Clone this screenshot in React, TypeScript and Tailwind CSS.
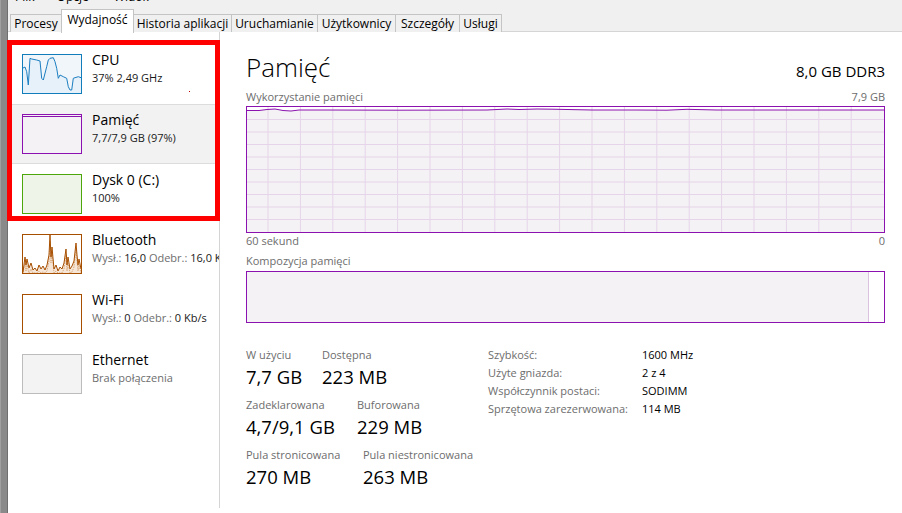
import type { ReactNode } from "react";

const sans = "font-['Open_Sans','Noto_Sans',sans-serif]";

const cpuPoints = [
  [0, 13], [2, 12], [3.7, 16.7], [5.3, 30], [7, 3.3], [8.7, 4], [13.7, 5], [17, 6], [18.7, 23.3],
  [20.3, 25], [23.7, 11.7], [25.3, 5], [27, 3.3], [30.3, 2.7], [32, 6.7], [33.7, 13.3], [35.3, 23.3],
  [37, 20], [40.3, 21.7], [43.7, 23.3], [45.3, 31.7], [47, 35], [48.7, 35], [50.3, 23.3], [52, 22.7],
  [55.3, 21.7], [58, 22.7],
];

const btPoints = [
  [0, 37], [2, 22], [3, 30], [4, 24], [6, 33], [8, 28], [10, 35], [12, 33], [14, 36], [16, 30],
  [18, 34], [20, 31], [22, 35], [24, 30], [26, 20], [27, 0], [28, 22], [29, 12], [31, 34], [33, 30],
  [35, 36], [37, 32], [39, 34], [41, 28], [43, 14], [44, 30], [45, 22], [47, 34], [49, 31], [51, 26],
  [53, 8], [54, 20], [55, 30], [56, 24], [58, 34],
];

const line = (pts: number[][]) => pts.map(([x, y]) => `${x},${y}`).join(" ");

const memLine = [
  [0, 3.5], [12, 3.5], [20, 2.5], [28, 2], [36, 3.5], [44, 4], [52, 3], [80, 3], [150, 3.2],
  [240, 3], [260, 2], [272, 2.5], [290, 2], [305, 2.2], [325, 2.6], [345, 3], [390, 3], [420, 3.2],
  [440, 2.3], [470, 3], [637, 3],
];

const tabs = [
  { label: "Procesy", w: "w-[52px]" },
  { label: "Wydajność", w: "w-[73px]", active: true },
  { label: "Historia aplikacji", w: "w-[99px]" },
  { label: "Uruchamianie", w: "w-[87px]" },
  { label: "Użytkownicy", w: "w-[79px]" },
  { label: "Szczegóły", w: "w-[65px]" },
  { label: "Usługi", w: "w-[43px]" },
];

function Thumb({ border, bg, children }: { border: string; bg: string; children?: ReactNode }) {
  return (
    <div className={`h-[40px] w-[60px] shrink-0 border ${border} ${bg}`}>
      {children}
    </div>
  );
}

function SideItem({
  thumb,
  title,
  sub,
  selected,
}: {
  thumb: ReactNode;
  title: string;
  sub: ReactNode;
  selected?: boolean;
}) {
  return (
    <div
      className={`flex h-[60px] items-start border-y pl-[14px] pt-[9px] ${
        selected ? "border-[#dcdcdc] bg-[#f2f2f2]" : "border-transparent"
      }`}
    >
      {thumb}
      <div className="-mt-[4px] ml-[10px] min-w-0 whitespace-nowrap">
        <div className="text-[14px] leading-[20px] text-black">{title}</div>
        <div className="text-[11px] leading-[16px] text-[#1a1a1a]">{sub}</div>
      </div>
    </div>
  );
}

function Stat({ label, value, w }: { label: string; value: string; w?: string }) {
  return (
    <div className={`flex flex-col ${w ?? ""}`}>
      <span className="text-[11px] leading-[16px] text-[#6d6d6d]">{label}</span>
      <span className="mt-px text-[18.5px] leading-[26px] text-black">{value}</span>
    </div>
  );
}

function MemoryGraph() {
  const vLines = Array.from({ length: 19 }, (_, i) => 21 + i * 32.4);
  const hLines = Array.from({ length: 9 }, (_, i) => (i + 1) * 12.5);
  const pts = line(memLine);
  return (
    <div className="h-[127px] w-full border border-[#8b12ae] bg-white">
      <svg className="block h-full w-full" viewBox="0 0 637 125" preserveAspectRatio="none">
        <polygon points={`0,125 ${pts} 637,125`} fill="#f4f2f4" />
        {vLines.map((x) => (
          <line key={x} x1={x} y1={0} x2={x} y2={125} stroke="#e6d4ea" strokeWidth={1} />
        ))}
        {hLines.map((y) => (
          <line key={y} x1={0} y1={y} x2={637} y2={y} stroke="#e6d4ea" strokeWidth={1} />
        ))}
        <polyline points={pts} fill="none" stroke="#8b12ae" strokeWidth={1} />
      </svg>
    </div>
  );
}

export default function App() {
  return (
    <div className={`relative flex h-[513px] w-[902px] overflow-hidden bg-white ${sans}`}>
      {/* window edge */}
      <div className="h-full w-[8px] shrink-0 border-l border-r border-l-[#a0a0a0] border-r-[#6f6f6f] bg-[#8a8a8a]" />

      <div className="flex min-w-0 flex-1 flex-col">
        {/* menu + tabs */}
        <div className="h-[32px] shrink-0 border-b border-[#d5d5d5] bg-[#f0f0f0]">
          <div className="h-[9px] overflow-hidden">
            <div className="-mt-[11px] flex pl-[7px] text-[12px] leading-[16px] text-black">
              <span>Plik</span>
              <span className="ml-[22px]">Opcje</span>
              <span className="ml-[25px]">Widok</span>
            </div>
          </div>
          <div className="flex h-[23px] items-end pl-[3px]">
            {tabs.map((t) =>
              t.active ? (
                <div
                  key={t.label}
                  className={`${t.w} relative z-10 -mb-px -ml-px flex h-[24px] justify-center border border-b-0 border-[#c4c4c4] bg-white pt-[2px] text-[12px] leading-[16px] text-black`}
                >
                  {t.label}
                </div>
              ) : (
                <div
                  key={t.label}
                  className={`${t.w} -ml-px flex h-[18px] items-center justify-center border border-b-0 border-[#c4c4c4] bg-[#f0f0f0] text-[12px] leading-[16px] text-black`}
                >
                  {t.label}
                </div>
              ),
            )}
          </div>
        </div>

        <div className="flex min-h-0 flex-1">
          {/* sidebar */}
          <div className="h-[476px] w-[212px] shrink-0 overflow-hidden border-r border-[#d5d5d5] pt-[12px]">
            <SideItem
              title="CPU"
              sub="37% 2,49 GHz"
              thumb={
                <Thumb border="border-[#117dbb]" bg="bg-[#f1f6fa]">
                  <svg className="block h-full w-full" viewBox="0 0 58 38">
                    <polygon points={`0,38 ${line(cpuPoints)} 58,38`} fill="#dcecf7" opacity={0.5} />
                    <polyline points={line(cpuPoints)} fill="none" stroke="#1b7ec1" strokeWidth={1} />
                  </svg>
                </Thumb>
              }
            />
            <SideItem
              selected
              title="Pamięć"
              sub="7,7/7,9 GB (97%)"
              thumb={
                <Thumb border="border-[#8b12ae]" bg="bg-[#f4f2f4]">
                  <div className="mt-[1px] h-px w-full bg-[#8b12ae]" />
                </Thumb>
              }
            />
            <SideItem
              title="Dysk 0 (C:)"
              sub="100%"
              thumb={<Thumb border="border-[#4da60c]" bg="bg-[#eff4e8]" />}
            />
            <SideItem
              title="Bluetooth"
              sub={
                <>
                  <span className="text-[#6d6d6d]">Wysł.:</span> 16,0{" "}
                  <span className="text-[#6d6d6d]">Odebr.:</span> 16,0 Kb/s
                </>
              }
              thumb={
                <Thumb border="border-[#a74f01]" bg="bg-white">
                  <svg className="block h-full w-full" viewBox="0 0 58 38">
                    <polygon points={`0,38 ${line(btPoints)} 58,38`} fill="#f5e6d8" />
                    <polyline
                      points={line(btPoints.map(([x, y]) => [x, Math.min(38, y + 6)]))}
                      fill="none"
                      stroke="#d39a66"
                      strokeWidth={0.8}
                      strokeDasharray="1.5 1"
                    />
                    <polyline points={line(btPoints)} fill="none" stroke="#a74f01" strokeWidth={1} />
                  </svg>
                </Thumb>
              }
            />
            <SideItem
              title="Wi-Fi"
              sub={
                <>
                  <span className="text-[#6d6d6d]">Wysł.:</span> 0{" "}
                  <span className="text-[#6d6d6d]">Odebr.:</span> 0 Kb/s
                </>
              }
              thumb={<Thumb border="border-[#a74f01]" bg="bg-white" />}
            />
            <SideItem
              title="Ethernet"
              sub={<span className="text-[#6d6d6d]">Brak połączenia</span>}
              thumb={<Thumb border="border-[#bcbcbc]" bg="bg-[#f3f3f3]" />}
            />
          </div>

          {/* details */}
          <div className="min-w-0 flex-1 pl-[26px] pr-[17px] pt-[17px]">
            <div className="flex items-baseline justify-between">
              <span className="text-[26px] font-light leading-[36px] text-black">Pamięć</span>
              <span className="text-[15px] leading-[20px] text-black">8,0 GB DDR3</span>
            </div>
            <div className="mt-[4px] flex justify-between text-[11px] leading-[16px] text-[#6d6d6d]">
              <span>Wykorzystanie pamięci</span>
              <span>7,9 GB</span>
            </div>
            <div className="mt-px">
              <MemoryGraph />
            </div>
            <div className="flex justify-between text-[11px] leading-[16px] text-[#6d6d6d]">
              <span>60 sekund</span>
              <span>0</span>
            </div>
            <div className="mt-[4px] text-[11px] leading-[16px] text-[#6d6d6d]">Kompozycja pamięci</div>
            <div className="mt-[2px] flex h-[52px] border border-[#8b12ae] bg-white">
              <div className="flex-1 border-r border-[#d9c3df] bg-[#f4f2f4]" />
              <div className="w-[15px]" />
            </div>

            <div className="mt-[24px] flex items-start">
              <div className="flex w-[242px] shrink-0 flex-col gap-[7px]">
                <div className="flex">
                  <Stat label="W użyciu" value="7,7 GB" w="w-[76px]" />
                  <Stat label="Dostępna" value="223 MB" />
                </div>
                <div className="flex">
                  <Stat label="Zadeklarowana" value="4,7/9,1 GB" w="w-[111px]" />
                  <Stat label="Buforowana" value="229 MB" />
                </div>
                <div className="flex">
                  <Stat label="Pula stronicowana" value="270 MB" w="w-[117px]" />
                  <Stat label="Pula niestronicowana" value="263 MB" />
                </div>
              </div>
              <div className="-mt-px grid grid-cols-[154px_auto] text-[11px] leading-[18px]">
                <span className="text-[#6d6d6d]">Szybkość:</span>
                <span className="text-black">1600 MHz</span>
                <span className="text-[#6d6d6d]">Użyte gniazda:</span>
                <span className="text-black">2 z 4</span>
                <span className="text-[#6d6d6d]">Współczynnik postaci:</span>
                <span className="text-black">SODIMM</span>
                <span className="text-[#6d6d6d]">Sprzętowa zarezerwowana:</span>
                <span className="text-black">114 MB</span>
              </div>
            </div>
          </div>
        </div>
      </div>

      {/* annotation overlay */}
      <div className="pointer-events-none absolute left-[7px] top-[40px] h-[181px] w-[213px] border-[5px] border-[#ff0000]" />
      <div className="pointer-events-none absolute left-[189px] top-[91px] h-px w-px bg-[#c00000]" />
    </div>
  );
}
